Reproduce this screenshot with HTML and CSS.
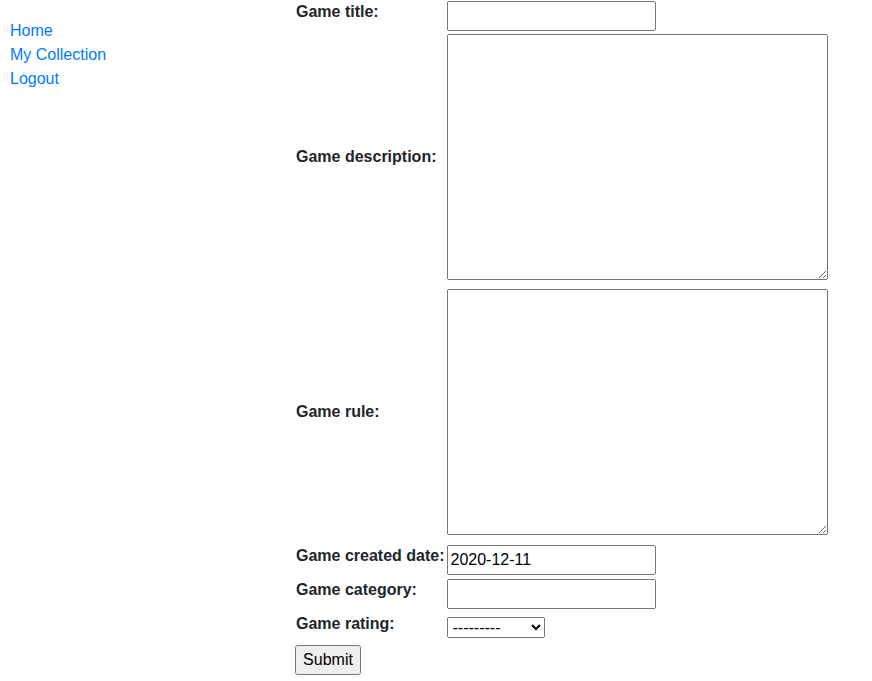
FILE: index.html
```html
<!DOCTYPE html>
<html>
<head>
<meta charset="utf-8">
<link rel="stylesheet" href="styles.css">
</head>
<body>
<div class="page">
  <nav class="sidebar">
    <a href="#">Home</a>
    <a href="#">My Collection</a>
    <a href="#">Logout</a>
  </nav>
  <main class="content">
    <form class="game-form">
      <table class="form-table">
        <tr>
          <th><label for="id_title">Game title:</label></th>
          <td><input type="text" id="id_title" class="text-input"></td>
        </tr>
        <tr>
          <th><label for="id_desc">Game description:</label></th>
          <td><textarea id="id_desc" class="area-input"></textarea></td>
        </tr>
        <tr>
          <th><label for="id_rule">Game rule:</label></th>
          <td><textarea id="id_rule" class="area-input"></textarea></td>
        </tr>
        <tr>
          <th><label for="id_date">Game created date:</label></th>
          <td><input type="text" id="id_date" class="text-input" value="2020-12-11"></td>
        </tr>
        <tr>
          <th><label for="id_cat">Game category:</label></th>
          <td><input type="text" id="id_cat" class="text-input"></td>
        </tr>
        <tr>
          <th><label for="id_rating">Game rating:</label></th>
          <td><select id="id_rating" class="select-input"><option>---------</option></select></td>
        </tr>
      </table>
      <button type="submit" class="submit-btn">Submit</button>
    </form>
  </main>
</div>
</body>
</html>
```

FILE: styles.css
```css
html, body {
  margin: 0;
  padding: 0;
  background: #fff;
}
body {
  font-family: "Liberation Sans", Arial, sans-serif;
  font-size: 16px;
  line-height: 24px;
  color: #212529;
}
.page {
  display: flex;
  align-items: flex-start;
}
.sidebar {
  width: 285px;
  padding: 19px 0 0 10px;
  display: flex;
  flex-direction: column;
}
.sidebar a {
  color: #007bff;
  text-decoration: none;
  line-height: 24px;
}
.content {
  flex: 1;
}
.form-table {
  border-collapse: collapse;
  margin-top: -1px;
}
.form-table th,
.form-table td {
  padding: 1px;
  vertical-align: middle;
  text-align: left;
}
.form-table th label {
  display: inline-block;
  margin-bottom: 8px;
  font-weight: bold;
  line-height: 24px;
}
.text-input,
.area-input,
.select-input,
.submit-btn {
  margin: 0;
  font-family: inherit;
}
.text-input {
  box-sizing: border-box;
  width: 209px;
  height: 30px;
  font-size: 16px;
  line-height: 24px;
  padding: 1px 2px;
  vertical-align: middle;
}
.area-input {
  box-sizing: border-box;
  width: 381px;
  height: 246px;
  font-size: 16px;
  line-height: 24px;
  padding: 2px;
}
.select-input {
  box-sizing: border-box;
  width: 98px;
  height: 21px;
  font-size: 16px;
  padding: 0 0 0 1px;
  margin-top: -2px;
  vertical-align: middle;
}
.submit-btn {
  box-sizing: border-box;
  width: 66px;
  height: 30px;
  font-size: 16px;
  padding: 1px 6px;
  margin: 0;
}
```
